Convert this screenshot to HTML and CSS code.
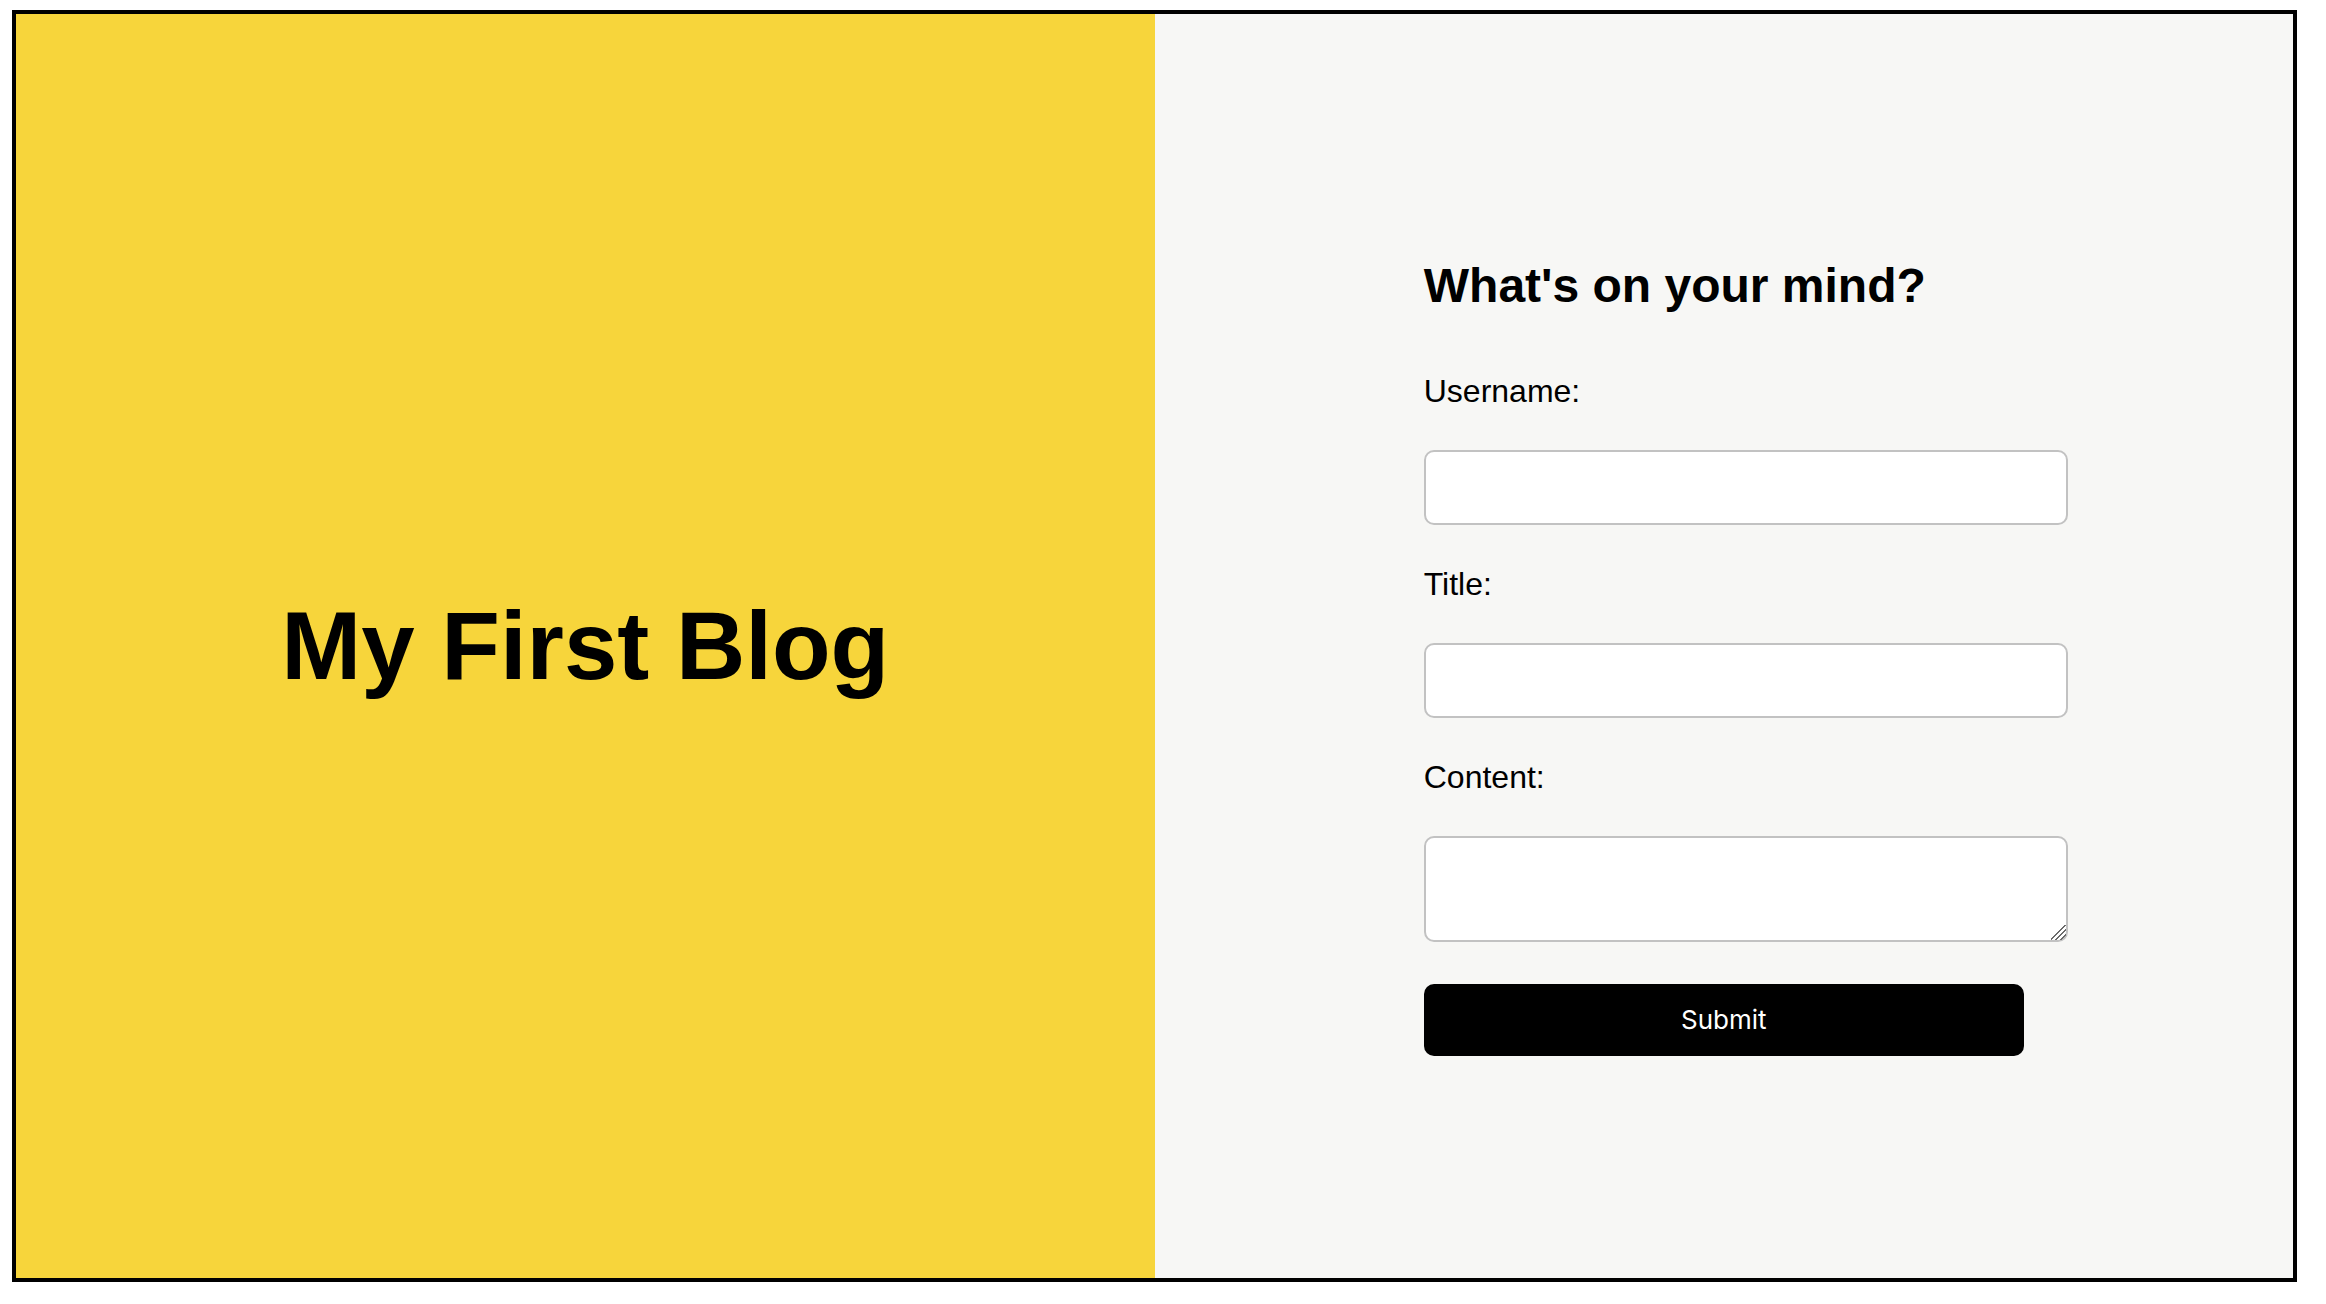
FILE: index.html
```html
<!DOCTYPE html>
<html lang="en">
<head>
<meta charset="utf-8">
<title>My First Blog</title>
<link rel="stylesheet" href="styles.css">
</head>
<body>
<div class="page">
  <section class="hero">
    <h1 class="hero-title">My First Blog</h1>
  </section>
  <section class="form-panel">
    <form class="post-form">
      <h2 class="form-title">What's on your mind?</h2>
      <label class="field-label" for="username">Username:</label>
      <input class="field-input" type="text" id="username">
      <label class="field-label" for="title">Title:</label>
      <input class="field-input" type="text" id="title">
      <label class="field-label" for="content">Content:</label>
      <textarea class="field-area" id="content"></textarea>
      <button class="submit-btn" type="button">Submit</button>
    </form>
  </section>
</div>
</body>
</html>
```
FILE: styles.css
```css
html, body {
  margin: 0;
  padding: 0;
  background: #ffffff;
}

body {
  font-family: "Liberation Sans", Arial, sans-serif;
  color: #000;
}

.page {
  box-sizing: border-box;
  margin: 10px 0 0 12px;
  width: 2285px;
  height: 1272px;
  border: 4px solid #000;
  display: flex;
}

.hero {
  flex: 1 1 0;
  background: #f7d53b;
  display: flex;
  align-items: center;
  justify-content: center;
}

.hero-title {
  margin: 0;
  font-size: 96px;
  font-weight: 700;
  line-height: normal;
}

.form-panel {
  flex: 1 1 0;
  background: #f7f7f5;
  display: flex;
  align-items: center;
  justify-content: center;
}

.post-form {
  width: 600px;
  padding-top: 21px;
  display: flex;
  flex-direction: column;
  align-items: flex-start;
}

.form-title {
  margin: 0 0 60px;
  font-size: 48px;
  font-weight: 700;
  line-height: normal;
}

.field-label {
  display: block;
  font-size: 32px;
  line-height: normal;
  margin-bottom: 40px;
}

.field-input,
.field-area {
  box-sizing: border-box;
  width: 644px;
  border: 2px solid #c2c2c2;
  border-radius: 10px;
  background: #fff;
  padding: 0 20px;
  font-family: "Liberation Sans", Arial, sans-serif;
  font-size: 26px;
  outline: none;
}

.field-input {
  height: 75px;
  margin: 0 0 41px;
}

.field-area {
  height: 106px;
  margin: 0 0 42px;
  padding: 10px 20px;
  resize: both;
}

.field-area::-webkit-scrollbar {
  width: 22px;
  height: 22px;
  background: transparent;
}

.field-area::-webkit-resizer {
  background: linear-gradient(135deg,
    transparent 0 46%,
    #6b6b6b 46% 52%,
    transparent 52% 62%,
    #6b6b6b 62% 68%,
    transparent 68% 78%,
    #6b6b6b 78% 84%,
    transparent 84% 100%);
}

.submit-btn {
  width: 600px;
  height: 72px;
  border: none;
  border-radius: 10px;
  background: #000;
  color: #fff;
  font-family: Inter, "Liberation Sans", sans-serif;
  font-size: 26px;
  cursor: pointer;
}
```
